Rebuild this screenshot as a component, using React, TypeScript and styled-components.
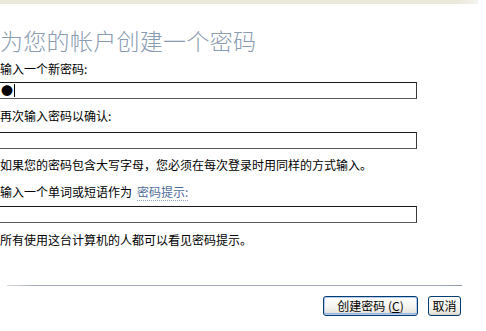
import styled, { createGlobalStyle } from "styled-components";

const GlobalStyle = createGlobalStyle`
  html, body {
    margin: 0;
    padding: 0;
    background: #ffffff;
    overflow: hidden;
  }
  body {
    font-family: "Noto Sans CJK SC", "Liberation Sans", sans-serif;
    font-size: 12px;
    color: #000;
  }
`;

const Page = styled.div`
  width: 486px;
  height: 331px;
  display: flex;
  flex-direction: column;
  background: #fff;
`;

const TopStrip = styled.div`
  width: 478px;
  height: 4px;
  background: linear-gradient(to right, #ebe9dc 0%, #ebe9dc 96%, #f6f5ef 100%);
`;

const Title = styled.h1`
  margin: 22px 0 0 0;
  font-size: 23px;
  line-height: 28px;
  font-weight: 300;
  letter-spacing: 0.3px;
  color: #8a9cb2;
  white-space: nowrap;
`;

const Label = styled.div<{ $top: number }>`
  margin-top: ${(p) => p.$top}px;
  font-size: 12px;
  line-height: 16px;
  white-space: nowrap;
`;

const HintLink = styled.span`
  margin-left: 5px;
  color: #4f6d9a;
  border-bottom: 1px dotted #8ea3c4;
  line-height: 14px;
`;

const Field = styled.div<{ $top: number }>`
  margin-top: ${(p) => p.$top}px;
  margin-left: -3px;
  width: 420px;
  height: 17px;
  box-sizing: border-box;
  border: 1px solid #1a1a1a;
  border-right-color: #3a3a3a;
  border-bottom-color: #5a5a5a;
  display: flex;
  align-items: center;
  padding-left: 3px;
`;

const Dot = styled.span`
  font-size: 12px;
  line-height: 13px;
  color: #000;
`;

const Caret = styled.span`
  width: 1px;
  height: 13px;
  margin-left: 1px;
  background: #000;
`;

const Separator = styled.div`
  margin: 37px 0 0 7px;
  width: 455px;
  height: 1px;
  background: linear-gradient(to right, #d8dce4 0%, #a3abb9 6%, #a3abb9 94%, #8e97a8 100%);
`;

const ButtonRow = styled.div`
  margin-top: 10px;
  padding-right: 25px;
  display: flex;
  justify-content: flex-end;
  gap: 10px;
`;

const Button = styled.button<{ $width: number; $default?: boolean }>`
  width: ${(p) => p.$width}px;
  height: 20px;
  box-sizing: border-box;
  padding: 0;
  border: 1px solid #003c74;
  border-radius: 3px;
  background: linear-gradient(#ffffff 0%, #f5f4ef 55%, #e6e3da 90%, #d6d0c5 100%);
  box-shadow: ${(p) =>
    p.$default ? "inset 0 0 0 1px #b8cdee, inset 0 -1px 0 1px #98b4e2" : "none"};
  font-family: "Noto Sans CJK SC", "Liberation Sans", sans-serif;
  font-size: 12px;
  line-height: 16px;
  color: #000;
  display: flex;
  align-items: center;
  justify-content: center;
`;

const AccessKey = styled.span`
  text-decoration: underline;
`;

export default function App() {
  return (
    <Page>
      <GlobalStyle />
      <TopStrip />
      <Title>为您的帐户创建一个密码</Title>
      <Label $top={7}>输入一个新密码:</Label>
      <Field $top={5}>
        <Dot>●</Dot>
        <Caret />
      </Field>
      <Label $top={9}>再次输入密码以确认:</Label>
      <Field $top={8} />
      <Label $top={8}>如果您的密码包含大写字母，您必须在每次登录时用同样的方式输入。</Label>
      <Label $top={11}>
        输入一个单词或短语作为<HintLink>密码提示:</HintLink>
      </Label>
      <Field $top={6} />
      <Label $top={9}>所有使用这台计算机的人都可以看见密码提示。</Label>
      <Separator />
      <ButtonRow>
        <Button $width={95} $default>
          创建密码 (<AccessKey>C</AccessKey>)
        </Button>
        <Button $width={33}>取消</Button>
      </ButtonRow>
    </Page>
  );
}
